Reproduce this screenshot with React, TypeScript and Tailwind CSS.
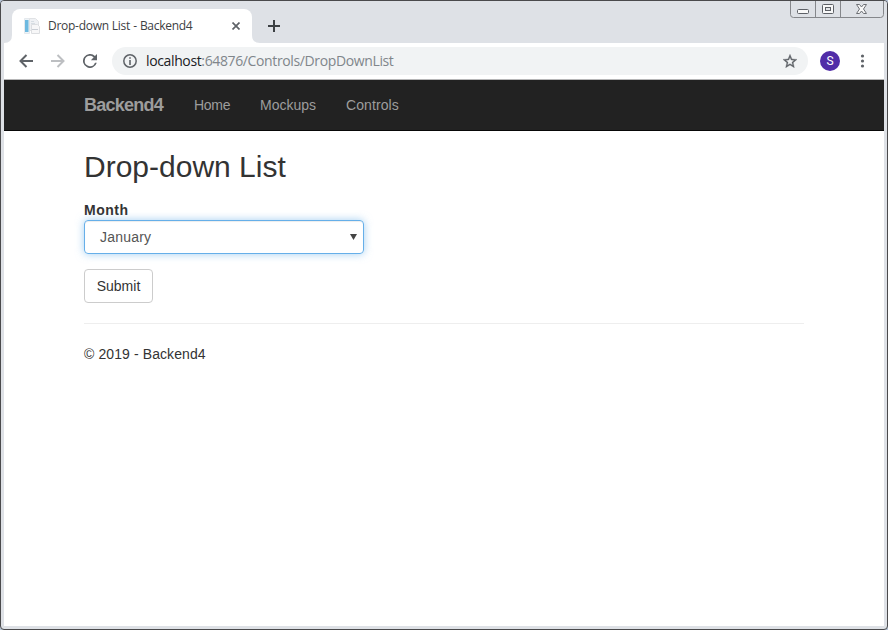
import React from 'react';

function WindowButtons() {
  return (
    <svg className="absolute right-[3px] -top-px h-[18px] w-[94px]" viewBox="0 0 94 18" fill="none">
      <path d="M.5 1V14.500q0 3 3 3h87q3 0 3-3V1M25.500 1v16M50.500 1v16" stroke="#85878b" />
      <rect x="7.500" y="9.500" width="11" height="4" rx="1" fill="#f8f8f8" stroke="#5d6066" />
      <rect x="32.500" y="4.500" width="11" height="9" rx="1" fill="#f8f8f8" stroke="#5d6066" />
      <rect x="35.500" y="7.500" width="5" height="3" fill="#e3e5e8" stroke="#5d6066" />
      <path d="M66.500 4.500h3l2 2.500 2-2.500h3l-3 4.500 3 4.500h-3l-2-2.500-2 2.500h-3l3-4.500z" fill="#f8f8f8" stroke="#6d7075" />
    </svg>
  );
}

function TabStrip() {
  return (
    <div className="relative flex h-[42px] items-end bg-[#dee1e6] pl-[11px]">
      <div className="relative flex h-[34px] w-[240px] items-center rounded-t-lg bg-white pl-3">
        <svg className="absolute -left-2 bottom-0 size-2" viewBox="0 0 8 8"><path d="M8 0v8H0q8 0 8-8z" fill="#fff" /></svg>
        <svg className="absolute -right-2 bottom-0 size-2" viewBox="0 0 8 8"><path d="M0 0v8h8Q0 8 0 0z" fill="#fff" /></svg>
        <svg className="size-4 shrink-0" viewBox="0 0 16 16">
          <path d="M.5.500h5v15h-5z" fill="#edf3f7" stroke="#e4e9ed" />
          <path d="M1 2h3.500v12H1z" fill="#6db9e0" />
          <path d="M5.500.500h6l3 3v9h-9z" fill="#eff1f4" stroke="#e0e2e5" />
          <path d="M7 3.500h3M7 5.500h4" stroke="#d6dde3" />
          <path d="M7.500 6.500h6l2 2v7h-8z" fill="#f7f7f8" stroke="#dcdee1" />
          <path d="M8 11.500h6" stroke="#c9ced5" />
        </svg>
        <span className="ml-2 w-[184px] shrink-0 whitespace-nowrap font-['Open_Sans',sans-serif] text-[12px] leading-4 tracking-[-0.28px] [word-spacing:0.3px] text-[#3c4043]">Drop-down List - Backend4</span>
        <svg className="size-2 shrink-0" viewBox="0 0 8 8"><path d="m.5.500 7 7m0-7-7 7" stroke="#5f6368" strokeWidth="1.700" /></svg>
      </div>
      <svg className="mb-[11px] ml-4 size-3" viewBox="0 0 12 12"><path d="M6 0v12M0 6h12" stroke="#3c4043" strokeWidth="2" /></svg>
      <WindowButtons />
    </div>
  );
}

function Toolbar() {
  return (
    <div className="mx-[3px] flex h-[37px] shrink-0 items-center border-b border-[#b6b6b7] bg-white">
      <svg className="ml-[15px] size-[14px]" viewBox="0 0 14 14" fill="none" stroke="#5f6368" strokeWidth="2"><path d="M14 7H1.500M7.500 1l-6 6 6 6" /></svg>
      <svg className="ml-[18px] size-[14px]" viewBox="0 0 14 14" fill="none" stroke="#bdbfc2" strokeWidth="2"><path d="M0 7h12.500M6.500 1l6 6-6 6" /></svg>
      <svg className="ml-[18px] size-[14px]" viewBox="4 4 16 16" fill="#5f6368"><path d="M17.650 6.350A8 8 0 1 0 19.730 14h-2.080A6 6 0 1 1 12 6c1.660 0 3.140.69 4.220 1.780L13 11h7V4z" /></svg>
      <div className="ml-[15px] flex h-7 w-[696px] items-center rounded-full bg-[#f1f3f4] pl-[11px]">
        <svg className="size-[14px] shrink-0" viewBox="0 0 14 14" fill="none"><circle cx="7" cy="7" r="6.200" stroke="#5f6368" strokeWidth="1.500" /><path d="M7 3.200v1.600M7 6v5" stroke="#5f6368" strokeWidth="1.600" /></svg>
        <span className="ml-[9px] grow whitespace-nowrap font-['Open_Sans',sans-serif] text-[14px] leading-5 tracking-[-0.37px] text-[#80868b]"><span className="text-[#202124]">localhost</span>:64876/Controls/DropDownList</span>
        <svg className="mr-[11px] size-[14px] shrink-0" viewBox="2 2 20 19" fill="#5f6368" stroke="#5f6368" strokeWidth=".5"><path d="m22 9.240-7.190-.62L12 2 9.190 8.630 2 9.240l5.460 4.730L5.820 21 12 17.270 18.180 21l-1.630-7.030zM12 15.400l-3.760 2.270 1-4.280-3.320-2.880 4.380-.38L12 6.100l1.710 4.040 4.380.38-3.320 2.880 1 4.280z" /></svg>
      </div>
      <div className="ml-3 flex size-5 items-center justify-center rounded-full bg-[#512da8] font-[Roboto,sans-serif] text-[12px] text-white">S</div>
      <svg className="ml-5 h-[14px] w-[5px]" viewBox="0 0 5 14" fill="#5f6368"><circle cx="2.500" cy="2" r="1.600" /><circle cx="2.500" cy="7" r="1.600" /><circle cx="2.500" cy="12" r="1.600" /></svg>
    </div>
  );
}

function Navigation() {
  return (
    <nav className="flex h-[51px] items-center border-b border-[#080808] bg-[#222] pl-20 text-[14px] text-[#9d9d9d]">
      <span className="w-[110px] text-[18px] font-bold leading-5 tracking-[-0.75px]">Backend4</span>
      <span className="w-[66px] tracking-[-0.3px]">Home</span>
      <span className="w-[86px]">Mockups</span>
      <span className="tracking-[0.1px]">Controls</span>
    </nav>
  );
}

export default function App() {
  return (
    <div className="h-[630px] w-[888px] bg-[#b9c7d8]">
      <div className="flex h-full flex-col overflow-hidden rounded-[4px] border border-[#4a4a4c] bg-[#dee1e6]">
        <TabStrip />
        <Toolbar />
        <main className="mx-[3px] mb-[3px] grow bg-white font-['Liberation_Sans',Arial,sans-serif] text-[14px] leading-5 text-[#333]">
          <Navigation />
          <div className="flex flex-col items-start px-20">
            <h1 className="mt-[19px] text-[30px] leading-[33px]">Drop-down List</h1>
            <label className="mt-[17px] font-bold tracking-[0.5px]">Month</label>
            <div className="flex h-[34px] w-[280px] items-center justify-between rounded-[4px] border border-[#66afe9] pl-[15px] pr-[6px] text-[#555] shadow-[inset_0_1px_1px_rgba(0,0,0,0.075),0_0_8px_rgba(102,175,233,0.6)]">
              <span className="tracking-[0.2px]">January</span>
              <svg className="h-[6px] w-[7px]" viewBox="0 0 7 6"><path d="M0 0h7L3.500 6z" fill="#444" /></svg>
            </div>
            <button className="mt-[15px] h-[34px] w-[69px] rounded-[4px] border border-[#ccc]">Submit</button>
            <div className="mt-5 w-full border-t border-[#eee]" />
            <footer className="mt-5 tracking-[0.1px]">© 2019 - Backend4</footer>
          </div>
        </main>
      </div>
    </div>
  );
}
